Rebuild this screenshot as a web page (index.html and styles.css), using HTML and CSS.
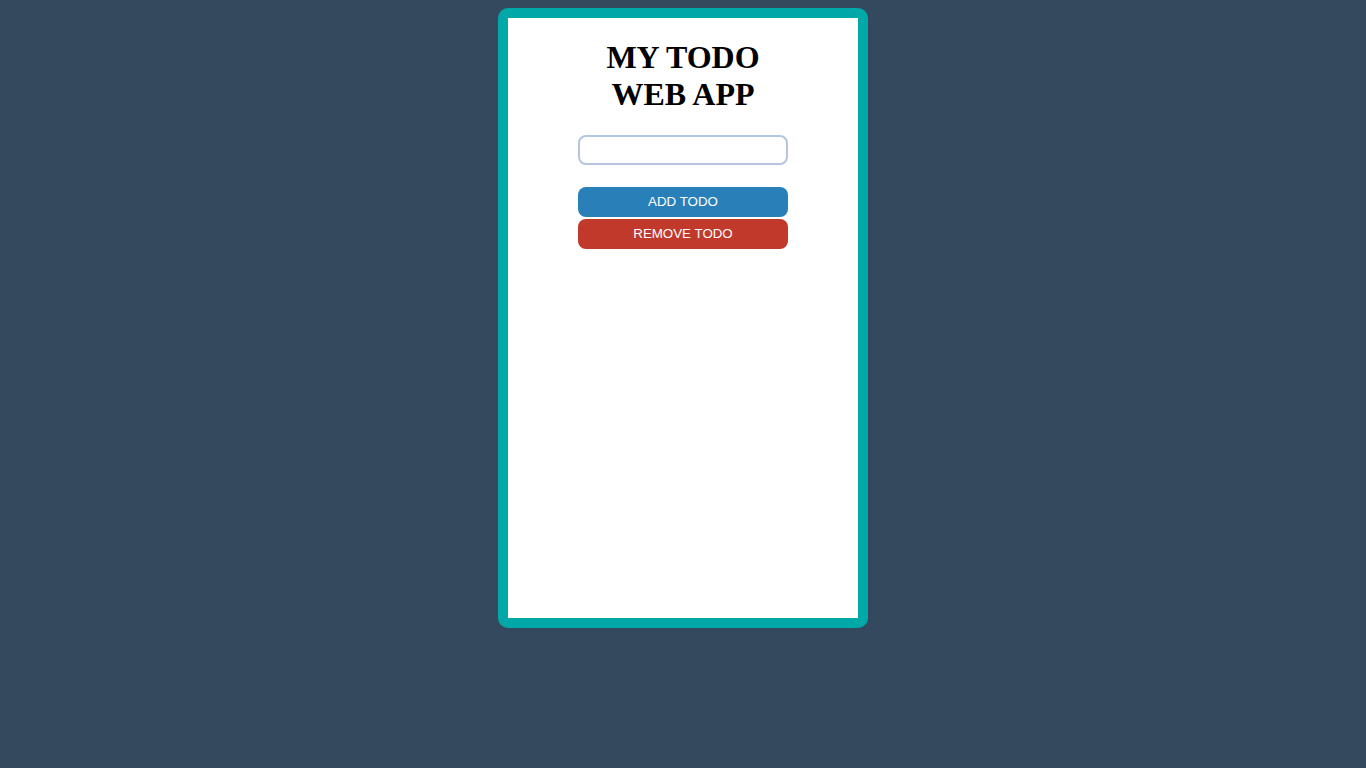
FILE: index.html
```html
<!DOCTYPE html>
<html>
<head>
<meta charset="utf-8">
<title>My Todo Web App</title>
<link rel="stylesheet" href="styles.css">
</head>
<body>
<div class="app">
  <h1 class="title">MY TODO<br>WEB APP</h1>
  <input class="todo-input" type="text">
  <div class="actions">
    <button class="btn btn-add">ADD TODO</button>
    <button class="btn btn-remove">REMOVE TODO</button>
  </div>
  <ul class="todo-list"></ul>
</div>
</body>
</html>
```
FILE: styles.css
```css
html, body {
  margin: 0;
  padding: 0;
}
body {
  background: #34495e;
  min-height: 768px;
  display: flex;
  justify-content: center;
  align-items: flex-start;
  padding-top: 8px;
  box-sizing: border-box;
}
.app {
  width: 350px;
  height: 600px;
  background: #ffffff;
  border: 10px solid #00a8a8;
  border-radius: 10px;
  display: flex;
  flex-direction: column;
  align-items: center;
  box-sizing: content-box;
}
.title {
  font-family: "Liberation Serif", "Times New Roman", serif;
  font-size: 32px;
  font-weight: bold;
  text-align: center;
  color: #000;
  margin: 21px 0 22px 0;
  line-height: 37px;
}
.todo-input {
  width: 210px;
  height: 30px;
  box-sizing: border-box;
  border: 2px solid #b4c6df;
  border-radius: 8px;
  outline: none;
  padding: 0 8px;
  margin: 0;
  font-family: "Liberation Sans", Arial, sans-serif;
}
.actions {
  display: flex;
  flex-direction: column;
  gap: 2px;
  margin-top: 22px;
}
.btn {
  width: 210px;
  height: 30px;
  border: none;
  border-radius: 8px;
  color: #fff;
  font-family: "Liberation Sans", Arial, sans-serif;
  font-size: 13.333px;
  padding: 0 0 2px 0;
  margin: 0;
  cursor: pointer;
}
.btn-add {
  background: #2980b9;
}
.btn-remove {
  background: #c0392b;
}
.todo-list {
  margin: 0;
  padding: 0;
  list-style: none;
}
```
